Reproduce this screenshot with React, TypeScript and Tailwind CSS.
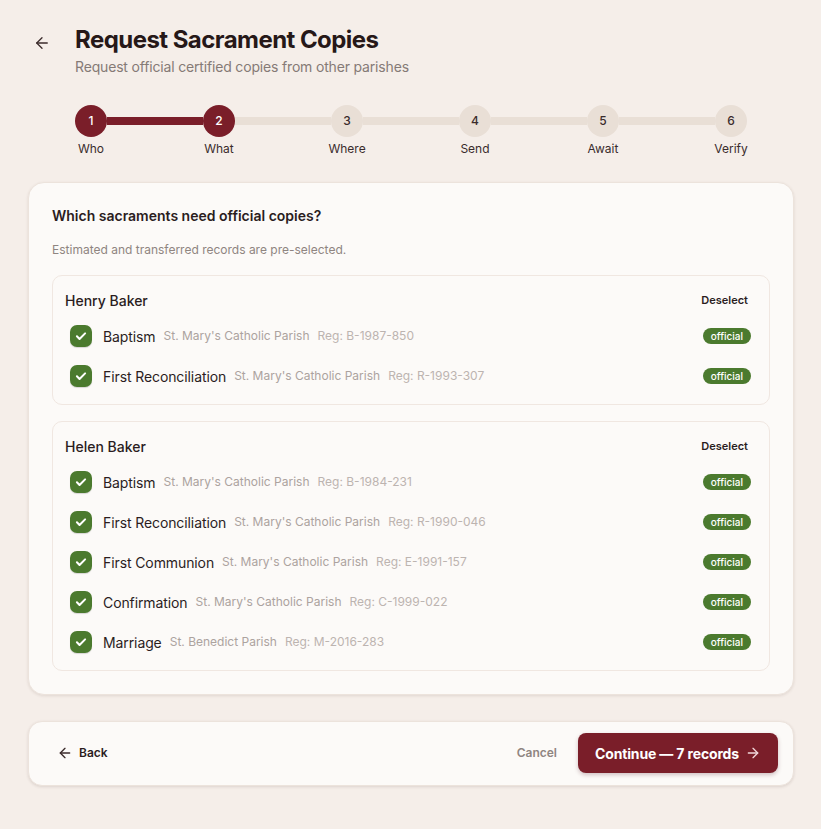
import React from "react";

const steps = ["Who", "What", "Where", "Send", "Await", "Verify"];

type Rec = { name: string; parish: string; reg: string };
const groups: { person: string; records: Rec[] }[] = [
  {
    person: "Henry Baker",
    records: [
      { name: "Baptism", parish: "St. Mary's Catholic Parish", reg: "Reg: B-1987-850" },
      { name: "First Reconciliation", parish: "St. Mary's Catholic Parish", reg: "Reg: R-1993-307" },
    ],
  },
  {
    person: "Helen Baker",
    records: [
      { name: "Baptism", parish: "St. Mary's Catholic Parish", reg: "Reg: B-1984-231" },
      { name: "First Reconciliation", parish: "St. Mary's Catholic Parish", reg: "Reg: R-1990-046" },
      { name: "First Communion", parish: "St. Mary's Catholic Parish", reg: "Reg: E-1991-157" },
      { name: "Confirmation", parish: "St. Mary's Catholic Parish", reg: "Reg: C-1999-022" },
      { name: "Marriage", parish: "St. Benedict Parish", reg: "Reg: M-2016-283" },
    ],
  },
];

function ArrowLeft({ className, size = 16, sw = 2 }: { className?: string; size?: number; sw?: number }) {
  return (
    <svg className={className} width={size} height={size} viewBox="0 0 24 24" fill="none" stroke="currentColor" strokeWidth={sw} strokeLinecap="round" strokeLinejoin="round">
      <path d="m12 19-7-7 7-7" />
      <path d="M19 12H5" />
    </svg>
  );
}
function ArrowRight({ className }: { className?: string }) {
  return (
    <svg className={className} width="16" height="16" viewBox="0 0 24 24" fill="none" stroke="currentColor" strokeWidth="2" strokeLinecap="round" strokeLinejoin="round">
      <path d="M5 12h14" />
      <path d="m12 5 7 7-7 7" />
    </svg>
  );
}

function Check() {
  return (
    <div className="w-[22px] h-[22px] rounded-[7px] bg-[#4b7a2e] flex items-center justify-center shrink-0 shadow-[0_1px_1px_rgba(0,0,0,0.15)]">
      <svg width="14" height="14" viewBox="0 0 24 24" fill="none" stroke="white" strokeWidth="3.5" strokeLinecap="round" strokeLinejoin="round">
        <path d="M5 12.5l4.5 4.5L19 7.5" />
      </svg>
    </div>
  );
}

export default function App() {
  return (
    <div
      className="min-h-[829px] w-full bg-[#f5eee9] pl-[28px] pr-[27px] pt-[24px] pb-[40px] text-[#2b1d1e]"
      style={{ fontFamily: "Inter, 'Noto Sans', sans-serif" }}
    >
      {/* Header */}
      <div className="flex items-start">
        <div className="w-[47px] pl-[5px] pt-[10px] text-[#3b2b2b]">
          <ArrowLeft size={18} sw={1.75} />
        </div>
        <div>
          <h1 className="text-[24px] leading-[32px] font-bold tracking-[-0.55px] text-[#261818]">Request Sacrament Copies</h1>
          <p className="text-[14px] leading-[20px] mt-[1px] tracking-[-0.17px] text-[#857a76]">Request official certified copies from other parishes</p>
        </div>
      </div>

      {/* Stepper */}
      <div className="flex items-start px-[47px] mt-[28px]">
        {steps.map((s, i) => (
          <React.Fragment key={s}>
            <div className="flex flex-col items-center w-8 shrink-0">
              <div
                className={
                  i < 2
                    ? "w-8 h-8 rounded-full bg-[#7a1e29] text-white text-[12px] font-medium flex items-center justify-center"
                    : "w-8 h-8 rounded-full bg-[#e9dfd6] text-[#3a2c2c] text-[12px] font-medium flex items-center justify-center"
                }
              >
                {i + 1}
              </div>
              <div className="mt-[4px] text-[12px] leading-[16px] whitespace-nowrap text-[#3a2c2c]">{s}</div>
            </div>
            {i < steps.length - 1 && (
              <div className={i === 0 ? "flex-1 h-2 mt-3 bg-[#7a1e29]" : "flex-1 h-2 mt-3 bg-[#e9dfd6]"} />
            )}
          </React.Fragment>
        ))}
      </div>

      {/* Main card */}
      <div className="mt-[25px] rounded-[16px] bg-[#fcfaf8] border border-[#ece3dc] shadow-[0_1px_3px_rgba(80,50,40,0.12)] px-[23px] pt-[23px] pb-[23px]">
        <h2 className="text-[14px] leading-[20px] font-semibold text-[#2b1d1e]">Which sacraments need official copies?</h2>
        <p className="mt-[16px] text-[12px] leading-[16px] text-[#8f8581]">Estimated and transferred records are pre-selected.</p>

        <div className="mt-[17px] flex flex-col gap-[16px]">
          {groups.map((g) => (
            <div key={g.person} className="rounded-[10px] border border-[#f0e7e1] bg-[#fcfaf8] pt-[13px] pb-[8px] px-[12px]">
              <div className="h-[22px] flex items-center justify-between pr-[9px]">
                <span className="text-[14px] font-medium text-[#2b1d1e]">{g.person}</span>
                <span className="text-[11px] font-semibold text-[#2b1d1e]">Deselect</span>
              </div>
              <div className="mt-[5px]">
                {g.records.map((r) => (
                  <div key={r.name + r.reg} className="h-10 flex items-center pl-[5px] pr-[6px]">
                    <Check />
                    <span className="ml-[11px] text-[14px] tracking-[-0.1px] text-[#2b1d1e]">{r.name}</span>
                    <span className="ml-[8px] text-[12px] text-[#aca39f]">{r.parish}</span>
                    <span className="ml-[8px] text-[12px] text-[#bcb4b0]">{r.reg}</span>
                    <span className="ml-auto h-[16px] px-[8px] rounded-full bg-[#4b7a2e] text-white text-[10px] font-medium leading-[16px]">official</span>
                  </div>
                ))}
              </div>
            </div>
          ))}
        </div>
      </div>

      {/* Footer */}
      <div className="mt-[26px] rounded-[14px] bg-[#fcfaf8] border border-[#ece3dc] shadow-[0_1px_3px_rgba(80,50,40,0.14)] pl-[15px] pr-[15px] pt-[11px] pb-[12px] flex items-center">
        <button className="flex items-center gap-[6px] pl-[13px] text-[12px] font-semibold text-[#2b1d1e]">
          <ArrowLeft className="text-[#3b2b2b]" />
          Back
        </button>
        <button className="ml-auto text-[12px] font-semibold text-[#8f8581]">Cancel</button>
        <button className="ml-[21px] h-10 w-[200px] rounded-[8px] bg-[#7a1e29] text-white text-[14px] font-bold tracking-[-0.15px] flex items-center justify-center gap-[6px] shadow-[0_2px_4px_rgba(80,20,30,0.25)]">
          Continue — 7 records
          <ArrowRight className="text-[#f1d7da]" />
        </button>
      </div>
    </div>
  );
}
